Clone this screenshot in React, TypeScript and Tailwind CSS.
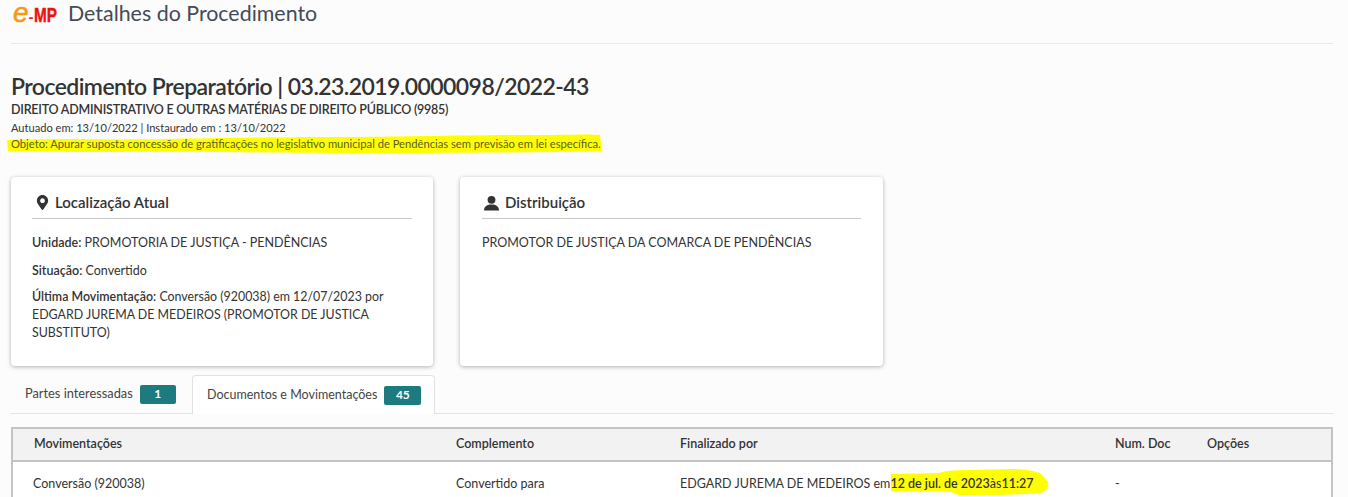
import React from "react";
import { FaMapMarkerAlt } from "react-icons/fa";

const Card = ({ width, inset, icon, title, children }: { width: string; inset: string; icon: React.ReactNode; title: string; children: React.ReactNode }) => (
  <div className={`${width} ${inset} h-[189px] bg-white rounded-[4px] pt-[12px] shadow-[0_1px_4px_rgba(0,0,0,0.3)]`}>
    <div className="flex items-center h-[27px] border-b border-[#c8c8c8] pb-[2px] box-content text-[15px] font-semibold text-[#333]">
      {icon}
      {title}
    </div>
    <div className="pt-[15px] text-[12.5px] leading-[18px] text-[#333]">{children}</div>
  </div>
);

const Row = ({ children }: { children: React.ReactNode }) => (
  <div className="grid grid-cols-[422px_224px_435px_92px_1fr] pl-[21px] items-center">{children}</div>
);

export default function App() {
  return (
    <div className="w-[1348px] h-[497px] overflow-hidden bg-[#fcfcfc] font-['Lato','Liberation_Sans',sans-serif] text-[#333]">
      <div className="mx-[11px] w-[1322px]">
        {/* cabecalho */}
        <div className="h-[44px] border-b border-[#e9e9e9] flex items-start">
          <div className="flex items-baseline pl-[2px] w-[57px] font-['Liberation_Sans',sans-serif]">
            <span className="text-[28px] leading-[26px] italic text-[#f59a12] [-webkit-text-stroke:0.6px_#f59a12]">e</span>
            <span className="text-[15px] leading-[26px] font-bold text-[#e8281e]">-</span>
            <span className="text-[21px] leading-[26px] font-bold text-[#e8150f] inline-block origin-left scale-x-[0.73] [-webkit-text-stroke:0.5px_#e8150f]">MP</span>
          </div>
          <div className="text-[21.4px] leading-[26px] text-[#444b57]">Detalhes do Procedimento</div>
        </div>

        {/* dados do procedimento */}
        <div className="pt-[27px]">
          <div className="text-[23px] leading-[30px] tracking-[-0.56px] font-semibold text-[#333]">
            Procedimento Preparatório | 03.23.2019.0000098/2022-43
          </div>
          <div className="text-[12.5px] leading-[15px] tracking-[-0.23px] mt-[1px] font-semibold text-[#333]">
            DIREITO ADMINISTRATIVO E OUTRAS MATÉRIAS DE DIREITO PÚBLICO (9985)
          </div>
          <div className="text-[11.1px] leading-[15px] mt-[3px] text-[#333]">
            Autuado em: 13/10/2022 | Instaurado em : 13/10/2022
          </div>
          <div className="relative text-[11.2px] leading-[16px] mt-[1px] text-[#5c5c2a]">
            <svg className="absolute left-[-5px] top-[-4px]" width="600" height="24" viewBox="0 0 600 24">
              <path
                d="M1 8 C60 6 100 8 160 7 S260 5 330 5 S450 3 520 3 S570 2 594 3 L596 19 C540 21 480 20 420 21 S300 21 220 20 S90 21 2 19 Z"
                fill="#ffff00"
              />
            </svg>
            <span className="relative">
              Objeto: Apurar suposta concessão de gratificações no legislativo municipal de Pendências sem previsão em lei específica.
            </span>
          </div>
        </div>

        {/* cards */}
        <div className="flex gap-[27px] mt-[25px]">
          <Card width="w-[422px]" inset="px-[21px]" icon={<FaMapMarkerAlt size={15} color="#333" className="ml-[3px] mr-[5px]" />} title="Localização Atual">
            <p>
              <b className="font-semibold">Unidade:</b> PROMOTORIA DE JUSTIÇA - PENDÊNCIAS
            </p>
            <p className="mt-[10px]">
              <b className="font-semibold">Situação:</b> Convertido
            </p>
            <p className="mt-[8px] text-[12.4px]">
              <b className="font-semibold">Última Movimentação:</b> Conversão (920038) em 12/07/2023 por EDGARD JUREMA DE MEDEIROS (PROMOTOR DE JUSTICA SUBSTITUTO)
            </p>
          </Card>
          <Card
            width="w-[423px]"
            inset="pl-[22px] pr-[22px]"
            icon={
              <svg className="ml-[2px] mr-[6px]" width="15" height="16" viewBox="0 0 16 16" fill="#333">
                <circle cx="8" cy="4.6" r="4.2" />
                <path d="M0 16 C0 11.5 3.5 9.5 8 9.5 S16 11.5 16 16 Z" />
              </svg>
            }
            title="Distribuição"
          >
            <p>PROMOTOR DE JUSTIÇA DA COMARCA DE PENDÊNCIAS</p>
          </Card>
        </div>

        {/* abas */}
        <div className="flex h-[39px] mt-[9px] border-b border-[#e2e2e2] text-[#444]">
          <div className="flex items-center w-[181px] pl-[14px] h-[38px] text-[12.8px]">
            Partes interessadas
            <span className="ml-[7px] w-[36px] h-[19px] rounded-[2px] bg-[#1b7b7f] text-white text-[12px] font-bold flex items-center justify-center">1</span>
          </div>
          <div className="flex items-center h-[39px] w-[243px] pl-[14px] border border-b-0 border-[#e2e2e2] rounded-t-[4px] bg-white text-[12.5px]">
            Documentos e Movimentações
            <span className="ml-[7px] w-[37px] h-[19px] rounded-[2px] bg-[#1b7b7f] text-white text-[12px] font-bold flex items-center justify-center">45</span>
          </div>
        </div>

        {/* tabela */}
        <div className="mt-[13px] border-x-2 border-[#c4c4c4] text-[12.5px] bg-white h-[80px]">
          <div className="h-[35px] border-y-2 border-[#c4c4c4] bg-[#f2f2f2] font-semibold flex items-center">
            <Row>
              <span>Movimentações</span>
              <span>Complemento</span>
              <span>Finalizado por</span>
              <span>Num. Doc</span>
              <span>Opções</span>
            </Row>
          </div>
          <div className="relative h-[45px] flex items-center">
            <svg className="absolute left-[878px] top-[6px]" width="160" height="28" viewBox="0 0 160 28">
              <path d="M0 6 L48 5 C56 2 70 2 80 2 L120 1 C135 1 148 3 152 8 L157 14 C158 20 155 24 148 25 C120 27 90 28 68 27 L60 24 C40 23 20 24 0 23 Z" fill="#ffff00" />
            </svg>
            <div className="relative">
              <Row>
                <span className="ml-[-1px]">Conversão (920038)</span>
                <span>Convertido para</span>
                <span>
                  EDGARD JUREMA DE MEDEIROS em<b className="font-semibold">12 de jul. de 2023</b>às<b className="font-semibold">11:27</b>
                </span>
                <span>-</span>
                <span />
              </Row>
            </div>
          </div>
        </div>
      </div>
    </div>
  );
}
